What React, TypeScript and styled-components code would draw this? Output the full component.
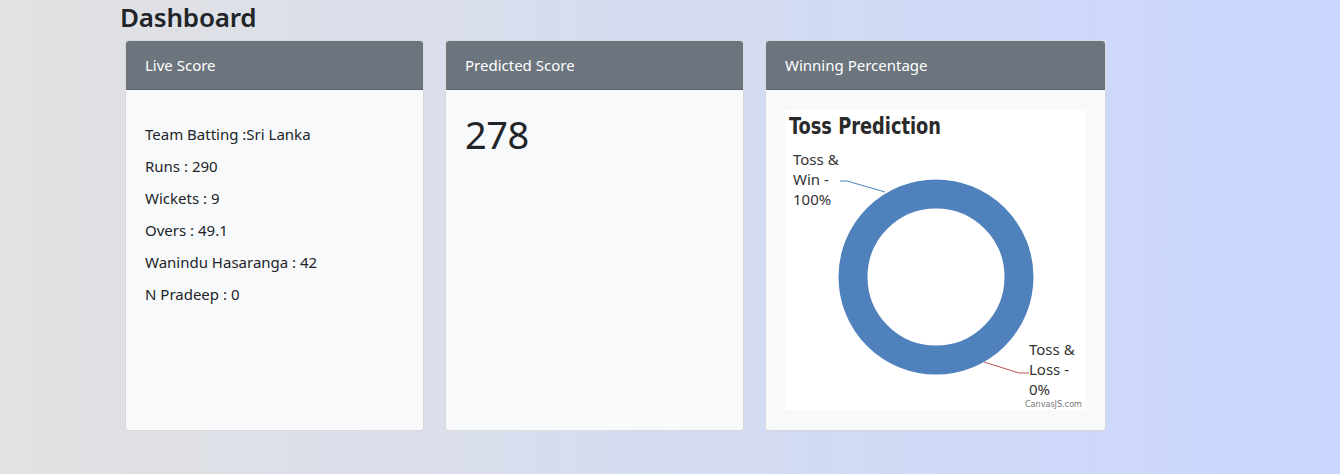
import React from 'react';
import styled, { createGlobalStyle } from 'styled-components';

const GlobalStyle = createGlobalStyle`
  *, *::before, *::after {
    box-sizing: border-box;
  }
  html, body {
    margin: 0;
    padding: 0;
  }
  body {
    font-family: 'Noto Sans', 'Open Sans', sans-serif;
    color: #212529;
    background: linear-gradient(to right, #e2e2e2, #c9d6ff);
    min-height: 474px;
  }
`;

const Page = styled.main`
  padding: 0 0 0 120px;
`;

const Title = styled.h1`
  margin: 0;
  padding-top: 1px;
  font-size: 26px;
  font-weight: 600;
  line-height: 32px;
  letter-spacing: -0.2px;
`;

const CardRow = styled.div`
  display: flex;
  align-items: stretch;
  gap: 21px;
  margin: 7px 0 0 5px;
`;

const Card = styled.section<{ $width: number }>`
  width: ${(p) => p.$width}px;
  display: flex;
  flex-direction: column;
  background: #f8f9fa;
  border: 1px solid rgba(0, 0, 0, 0.125);
  border-radius: 4px;
  overflow: hidden;
`;

const CardHeader = styled.header`
  height: 49px;
  padding: 0 19px;
  display: flex;
  align-items: center;
  background: #6c757d;
  color: #fff;
  font-size: 15px;
  border-bottom: 1px solid rgba(0, 0, 0, 0.125);
`;

const CardBody = styled.div`
  flex: 1;
  padding: 20px 19px;
`;

const StatList = styled.ul`
  list-style: none;
  margin: 0;
  padding: 12px 0 0;
  display: flex;
  flex-direction: column;
  gap: 8px;
`;

const Stat = styled.li`
  font-size: 15px;
  line-height: 24px;
`;

const BigNumber = styled.div`
  font-size: 38px;
  line-height: 48px;
  letter-spacing: -0.5px;
`;

const ChartBox = styled.div`
  width: 300px;
  height: 300px;
  background: #fff;
`;

const TossChart = () => (
  <svg width="300" height="300" viewBox="0 0 300 300">
    <text
      x="4"
      y="24"
      fontFamily="'DejaVu Sans Condensed', 'DejaVu Sans', sans-serif"
      fontWeight="bold"
      fontSize="23"
      fill="#2a2a2a"
      textLength="152"
      lengthAdjust="spacingAndGlyphs"
    >
      Toss Prediction
    </text>
    <circle cx="151" cy="167" r="83" fill="none" stroke="#4f81bc" strokeWidth="29" />
    <polyline points="55,71 62,71 100,82" fill="none" stroke="#4f81bc" strokeWidth="1" />
    <polyline points="199,252 234,263 244,263" fill="none" stroke="#c0504e" strokeWidth="1" />
    <g fontFamily="'Noto Sans', sans-serif" fontSize="15" fill="#333">
      <text x="8" y="55">Toss &amp;</text>
      <text x="8" y="75">Win -</text>
      <text x="8" y="95">100%</text>
      <text x="244" y="245">Toss &amp;</text>
      <text x="244" y="265">Loss -</text>
      <text x="244" y="285">0%</text>
    </g>
    <text
      x="297"
      y="297"
      textAnchor="end"
      fontFamily="'DejaVu Sans Condensed', sans-serif"
      fontSize="9"
      fill="#777"
    >
      CanvasJS.com
    </text>
  </svg>
);

const stats = [
  'Team Batting :Sri Lanka',
  'Runs : 290',
  'Wickets : 9',
  'Overs : 49.1',
  'Wanindu Hasaranga : 42',
  'N Pradeep : 0',
];

export default function App() {
  return (
    <>
      <GlobalStyle />
      <Page>
        <Title>Dashboard</Title>
        <CardRow>
          <Card $width={299}>
            <CardHeader>Live Score</CardHeader>
            <CardBody>
              <StatList>
                {stats.map((s) => (
                  <Stat key={s}>{s}</Stat>
                ))}
              </StatList>
            </CardBody>
          </Card>
          <Card $width={299}>
            <CardHeader>Predicted Score</CardHeader>
            <CardBody>
              <BigNumber>278</BigNumber>
            </CardBody>
          </Card>
          <Card $width={341}>
            <CardHeader>Winning Percentage</CardHeader>
            <CardBody>
              <ChartBox>
                <TossChart />
              </ChartBox>
            </CardBody>
          </Card>
        </CardRow>
      </Page>
    </>
  );
}
